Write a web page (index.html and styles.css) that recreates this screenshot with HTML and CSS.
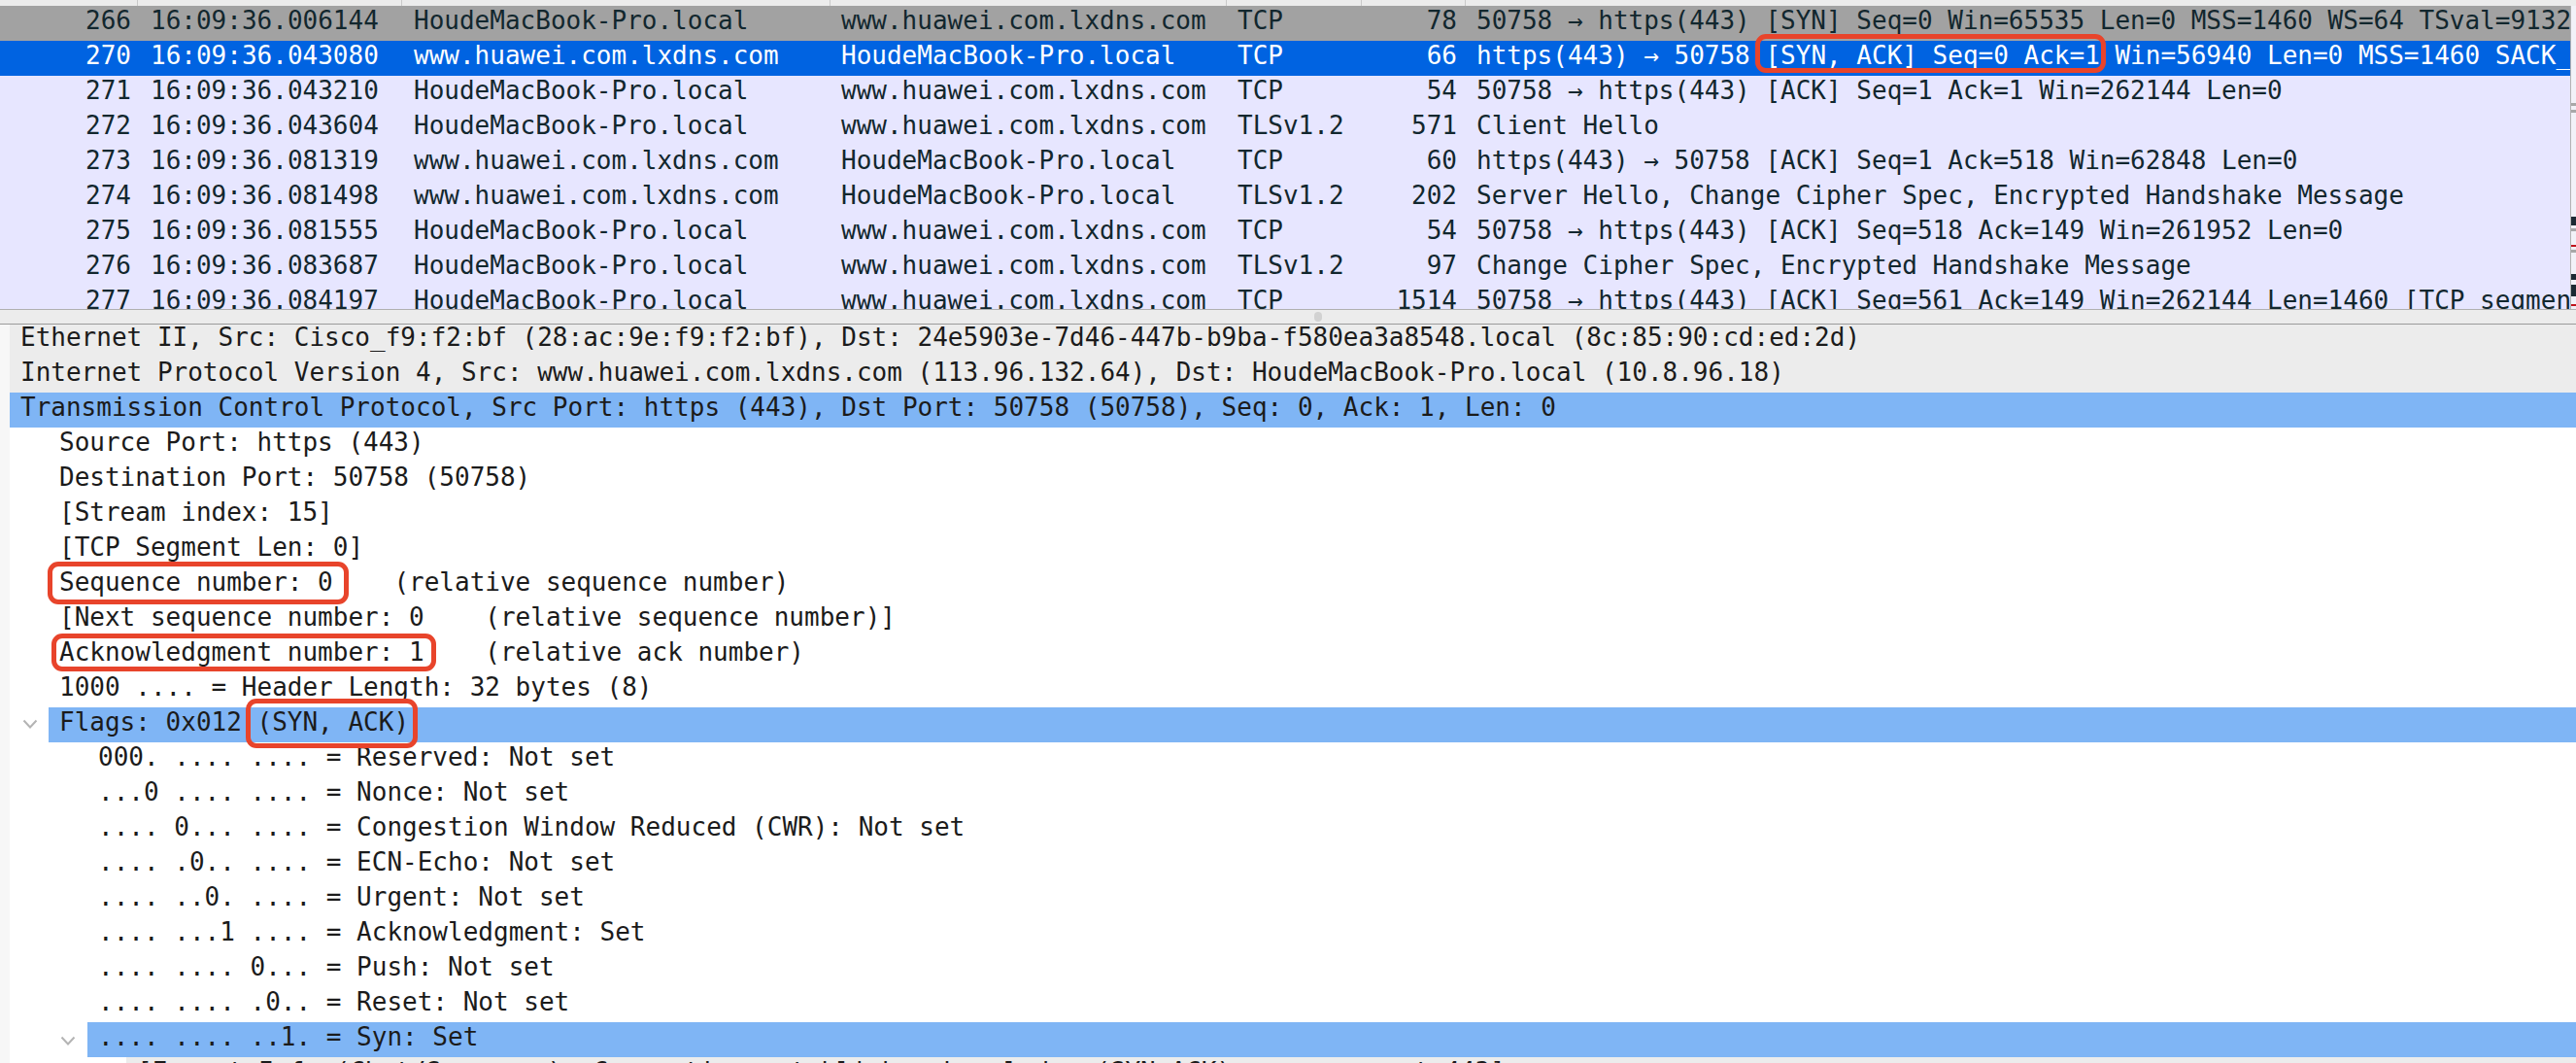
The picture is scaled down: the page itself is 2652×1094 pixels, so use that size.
FILE: index.html
```html
<!DOCTYPE html>
<html>
<head>
<meta charset="utf-8">
<link rel="stylesheet" href="styles.css">
</head>
<body>
<div class="app">
  <div class="colhdr"><span></span><span></span><span></span><span></span><span></span><span></span><span class="last"></span></div>
  <div class="plist">
    <div class="rows">
      <div class="row marked"><span class="num">266</span><span class="c">16:09:36.006144</span><span class="c">HoudeMacBook-Pro.local</span><span class="c">www.huawei.com.lxdns.com</span><span class="c">TCP</span><span class="num len">78</span><span class="c info">50758 → https(443) [SYN] Seq=0 Win=65535 Len=0 MSS=1460 WS=64 TSval=913245678 TSecr=0 SACK_PERM=1</span></div>
      <div class="row selected"><span class="num">270</span><span class="c">16:09:36.043080</span><span class="c">www.huawei.com.lxdns.com</span><span class="c">HoudeMacBook-Pro.local</span><span class="c">TCP</span><span class="num len">66</span><span class="c info">https(443) → 50758 <span class="box box-pkt">[SYN, ACK] Seq=0 Ack=1</span> Win=56940 Len=0 MSS=1460 SACK_PERM=1 WS=512</span></div>
      <div class="row"><span class="num">271</span><span class="c">16:09:36.043210</span><span class="c">HoudeMacBook-Pro.local</span><span class="c">www.huawei.com.lxdns.com</span><span class="c">TCP</span><span class="num len">54</span><span class="c info">50758 → https(443) [ACK] Seq=1 Ack=1 Win=262144 Len=0</span></div>
      <div class="row"><span class="num">272</span><span class="c">16:09:36.043604</span><span class="c">HoudeMacBook-Pro.local</span><span class="c">www.huawei.com.lxdns.com</span><span class="c">TLSv1.2</span><span class="num len">571</span><span class="c info">Client Hello</span></div>
      <div class="row"><span class="num">273</span><span class="c">16:09:36.081319</span><span class="c">www.huawei.com.lxdns.com</span><span class="c">HoudeMacBook-Pro.local</span><span class="c">TCP</span><span class="num len">60</span><span class="c info">https(443) → 50758 [ACK] Seq=1 Ack=518 Win=62848 Len=0</span></div>
      <div class="row"><span class="num">274</span><span class="c">16:09:36.081498</span><span class="c">www.huawei.com.lxdns.com</span><span class="c">HoudeMacBook-Pro.local</span><span class="c">TLSv1.2</span><span class="num len">202</span><span class="c info">Server Hello, Change Cipher Spec, Encrypted Handshake Message</span></div>
      <div class="row"><span class="num">275</span><span class="c">16:09:36.081555</span><span class="c">HoudeMacBook-Pro.local</span><span class="c">www.huawei.com.lxdns.com</span><span class="c">TCP</span><span class="num len">54</span><span class="c info">50758 → https(443) [ACK] Seq=518 Ack=149 Win=261952 Len=0</span></div>
      <div class="row"><span class="num">276</span><span class="c">16:09:36.083687</span><span class="c">HoudeMacBook-Pro.local</span><span class="c">www.huawei.com.lxdns.com</span><span class="c">TLSv1.2</span><span class="num len">97</span><span class="c info">Change Cipher Spec, Encrypted Handshake Message</span></div>
      <div class="row"><span class="num">277</span><span class="c">16:09:36.084197</span><span class="c">HoudeMacBook-Pro.local</span><span class="c">www.huawei.com.lxdns.com</span><span class="c">TCP</span><span class="num len">1514</span><span class="c info">50758 → https(443) [ACK] Seq=561 Ack=149 Win=262144 Len=1460 [TCP segment of a reassembled PDU]</span></div>
    </div>
    <div class="minimap">
      <i class="mk gray" style="top:100px"></i>
      <i class="mk gray" style="top:107px"></i>
      <i class="mk dark tall" style="top:217px"></i>
      <i class="mk gray" style="top:229px"></i>
      <i class="mk red" style="top:246px"></i>
      <i class="mk gray" style="top:251px"></i>
      <i class="mk dark" style="top:276px"></i>
      <i class="mk dark tall2" style="top:287px"></i>
      <i class="mk red" style="top:307px"></i>
    </div>
  </div>
  <div class="splitter"><span class="handle"></span></div>
  <div class="details">
    <div class="tree">
      <div class="line"><div class="cell gray">Ethernet II, Src: Cisco_f9:f2:bf (28:ac:9e:f9:f2:bf), Dst: 24e5903e-7d46-447b-b9ba-f580ea3a8548.local (8c:85:90:cd:ed:2d)</div></div>
      <div class="line"><div class="cell gray">Internet Protocol Version 4, Src: www.huawei.com.lxdns.com (113.96.132.64), Dst: HoudeMacBook-Pro.local (10.8.96.18)</div></div>
      <div class="line"><div class="cell hl">Transmission Control Protocol, Src Port: https (443), Dst Port: 50758 (50758), Seq: 0, Ack: 1, Len: 0</div></div>
      <div class="line"><div class="indent l1"></div><div class="cell">Source Port: https (443)</div></div>
      <div class="line"><div class="indent l1"></div><div class="cell">Destination Port: 50758 (50758)</div></div>
      <div class="line"><div class="indent l1"></div><div class="cell">[Stream index: 15]</div></div>
      <div class="line"><div class="indent l1"></div><div class="cell">[TCP Segment Len: 0]</div></div>
      <div class="line"><div class="indent l1"></div><div class="cell"><span class="box box-seq">Sequence number: 0</span>    (relative sequence number)</div></div>
      <div class="line"><div class="indent l1"></div><div class="cell">[Next sequence number: 0    (relative sequence number)]</div></div>
      <div class="line"><div class="indent l1"></div><div class="cell"><span class="box box-ack">Acknowledgment number: 1</span>    (relative ack number)</div></div>
      <div class="line"><div class="indent l1"></div><div class="cell">1000 .... = Header Length: 32 bytes (8)</div></div>
      <div class="line"><div class="indent l1"><svg class="chev" width="16" height="10" viewBox="0 0 16 10"><polyline points="1.5,1.5 8,8.5 14.5,1.5" fill="none" stroke="#b4b4b4" stroke-width="2"/></svg></div><div class="cell hl">Flags: 0x012 <span class="box box-flags">(SYN, ACK)</span></div></div>
      <div class="line"><div class="indent l2"></div><div class="cell">000. .... .... = Reserved: Not set</div></div>
      <div class="line"><div class="indent l2"></div><div class="cell">...0 .... .... = Nonce: Not set</div></div>
      <div class="line"><div class="indent l2"></div><div class="cell">.... 0... .... = Congestion Window Reduced (CWR): Not set</div></div>
      <div class="line"><div class="indent l2"></div><div class="cell">.... .0.. .... = ECN-Echo: Not set</div></div>
      <div class="line"><div class="indent l2"></div><div class="cell">.... ..0. .... = Urgent: Not set</div></div>
      <div class="line"><div class="indent l2"></div><div class="cell">.... ...1 .... = Acknowledgment: Set</div></div>
      <div class="line"><div class="indent l2"></div><div class="cell">.... .... 0... = Push: Not set</div></div>
      <div class="line"><div class="indent l2"></div><div class="cell">.... .... .0.. = Reset: Not set</div></div>
      <div class="line"><div class="indent l2"><svg class="chev" width="16" height="10" viewBox="0 0 16 10"><polyline points="1.5,1.5 8,8.5 14.5,1.5" fill="none" stroke="#b4b4b4" stroke-width="2"/></svg></div><div class="cell hl">.... .... ..1. = Syn: Set</div></div>
      <div class="line"><div class="indent l3"></div><div class="cell gray">[Expert Info (Chat/Sequence): Connection establish acknowledge (SYN+ACK): server port 443]</div></div>
    </div>
  </div>
</div>
</body>
</html>
```

FILE: styles.css
```css
html, body {
  margin: 0;
  padding: 0;
}
body {
  width: 2652px;
  height: 1094px;
  overflow: hidden;
  background: #ffffff;
  font-family: "DejaVu Sans Mono", "Liberation Mono", monospace;
  font-size: 26px;
}
.app {
  display: flex;
  flex-direction: column;
  height: 1094px;
}

/* column header remnant */
.colhdr {
  height: 6px;
  flex: none;
  background: #ececec;
  display: grid;
  grid-template-columns: 142px 272px 441px 408px 139px 107px minmax(0, 1fr);
}
.colhdr span {
  border-right: 1px solid #cacaca;
}
.colhdr span.last {
  border-right: none;
}

/* packet list */
.plist {
  height: 312px;
  flex: none;
  display: flex;
  overflow: hidden;
}
.rows {
  flex: 1;
  min-width: 0;
  overflow: hidden;
}
.row {
  display: grid;
  grid-template-columns: 142px 272px 441px 408px 139px 107px minmax(0, 1fr);
  height: 36px;
  box-sizing: border-box;
  padding-bottom: 6px;
  line-height: 30px;
  white-space: pre;
  color: #12272e;
  background: #e7e6ff;
}
.row.marked {
  background: #a2a2a2;
}
.row.selected {
  background: #0063e1;
  color: #ffffff;
}
.row > span {
  overflow: hidden;
}
.row > span.info {
  overflow: visible;
}
.num {
  text-align: right;
  padding-right: 7px;
}
.len {
  padding-right: 9px;
}
.c {
  padding-left: 11px;
}
.row > span:nth-child(2) {
  padding-left: 13px;
}
.row > span:nth-child(3) {
  padding-left: 12px;
}

.minimap {
  width: 5px;
  flex: none;
  border-left: 1px solid #b2b2b2;
  background: #f2f2f8;
  position: relative;
}
.mk {
  position: absolute;
  left: 0;
  right: 0;
  height: 2px;
}
.mk.gray { background: #a8a8a8; height: 3px; }
.mk.dark { background: #1c2a33; height: 6px; }
.mk.dark.tall { height: 9px; }
.mk.dark.tall2 { height: 12px; }
.mk.red { background: #c0131b; height: 2px; }

/* splitter */
.splitter {
  height: 16px;
  flex: none;
  box-sizing: border-box;
  background: #ececec;
  border-top: 1px solid #b0b0b0;
  border-bottom: 1px solid #9b9b9b;
  display: flex;
  justify-content: center;
  align-items: center;
  padding-left: 62px;
}
.handle {
  width: 8px;
  height: 10px;
  border-radius: 4px;
  background: #d2d2d2;
}

/* details tree */
.details {
  flex: 1;
  min-height: 0;
  overflow: hidden;
  background: #ffffff;
  border-left: 10px solid #f7f7f7;
}
.tree {
  margin-top: -2px;
}
.line {
  display: flex;
  height: 36px;
}
.indent {
  flex: none;
  display: flex;
  justify-content: flex-end;
  align-items: center;
}
.indent.l1 { width: 40px; }
.indent.l2 { width: 80px; }
.indent.l3 { width: 120px; }
.chev {
  margin-right: 11px;
  margin-bottom: 3px;
}
.indent.l2 .chev {
  margin-right: 12px;
  margin-bottom: -1px;
}
.cell {
  flex: 1;
  min-width: 0;
  box-sizing: border-box;
  padding-left: 11px;
  padding-bottom: 6px;
  line-height: 30px;
  white-space: pre;
  color: #1b1b1b;
}
.cell.gray {
  background: #ececec;
}
.cell.hl {
  background: #7fb5f5;
}

/* red annotation boxes */
.box {
  position: relative;
  display: inline-block;
}
.box::after {
  content: "";
  position: absolute;
  border: 5px solid #e8442b;
  border-radius: 11px;
}
.box-pkt::after {
  top: -7px;
  bottom: -3px;
  left: -10px;
  right: -6px;
}
.box-seq::after {
  top: -6px;
  bottom: -8px;
  left: -12px;
  right: -16px;
}
.box-ack::after {
  top: -4px;
  bottom: -5px;
  left: -8px;
  right: -12px;
}
.box-flags::after {
  top: -9px;
  bottom: -12px;
  left: -12px;
  right: -9px;
}
```
